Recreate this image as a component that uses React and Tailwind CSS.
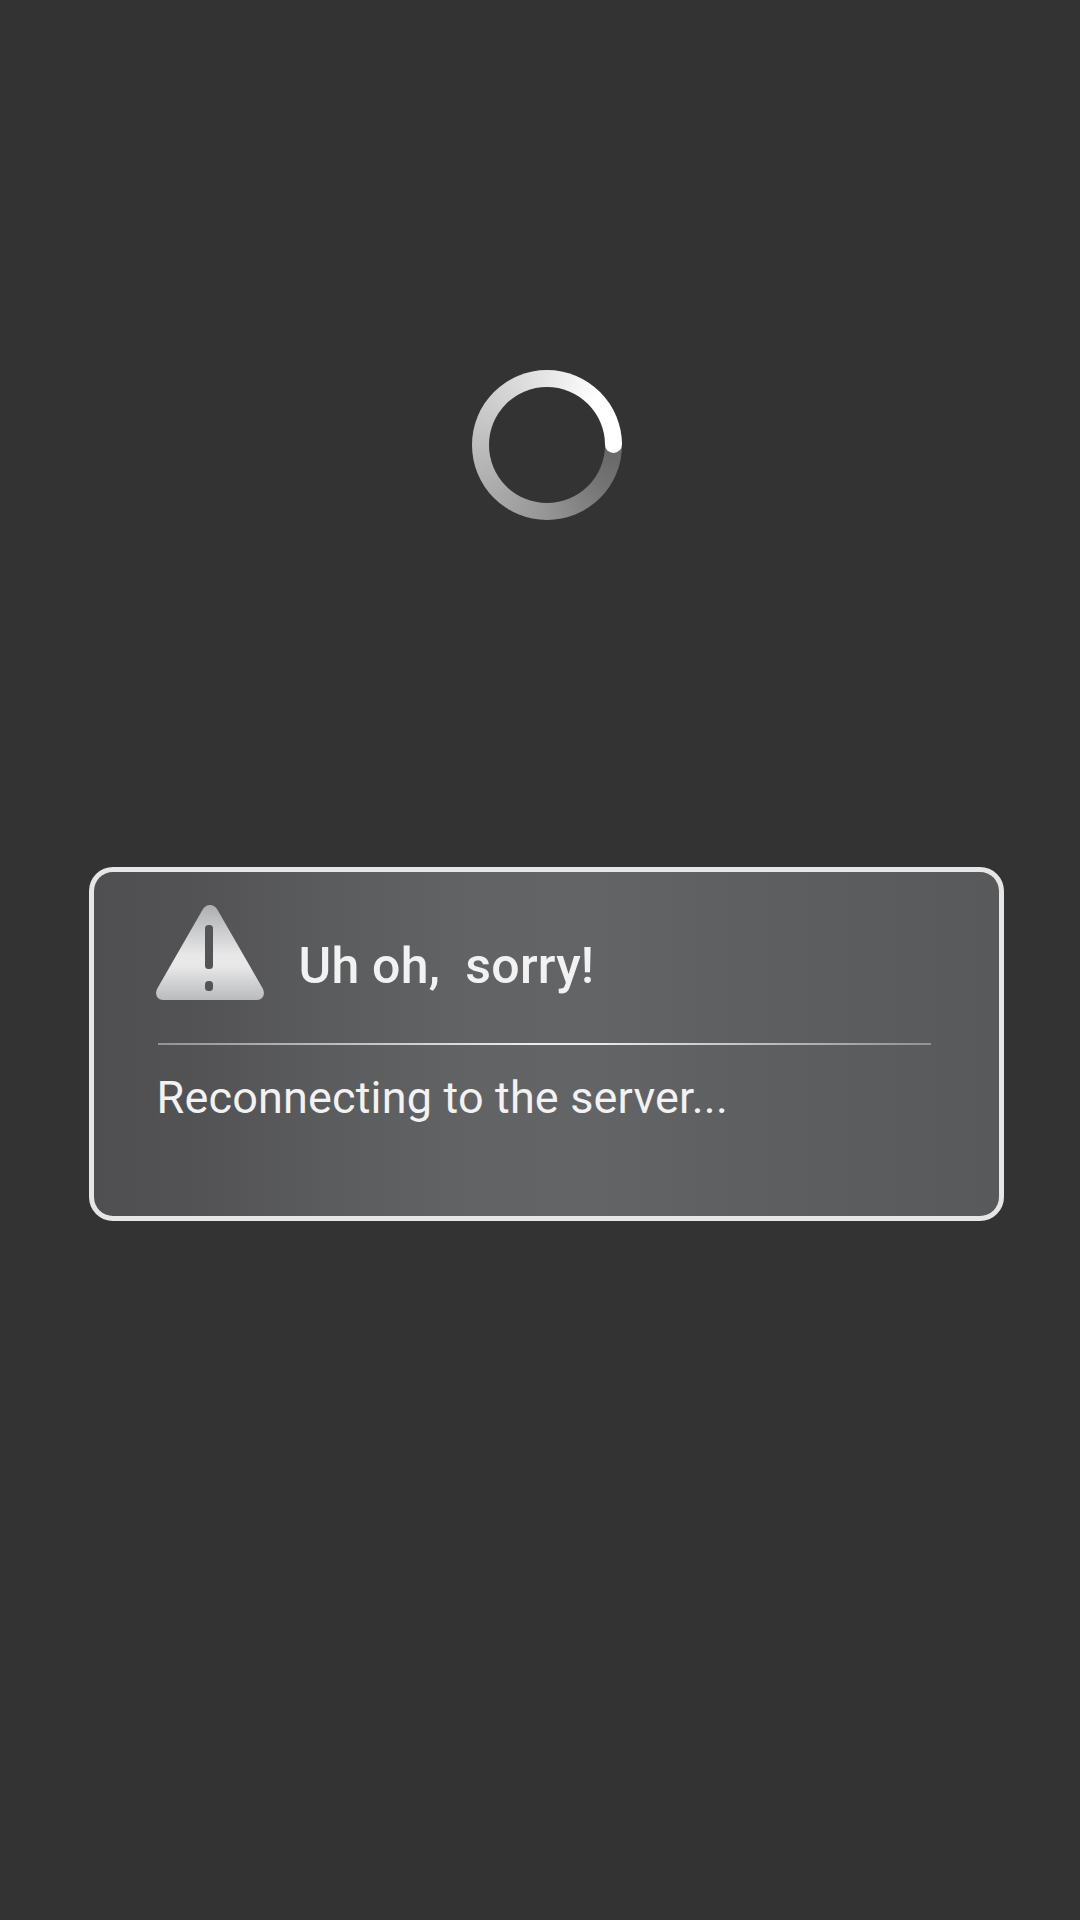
function Spinner() {
  return (
    <div className="relative ml-[472px] size-[150px]">
      <div className="size-full rounded-full bg-[conic-gradient(from_90deg,#666666_0%,#747474_10%,#959595_25%,#b5b5b5_45%,#c0c0c0_52%,#d2d2d2_63%,#e6e6e6_75%,#ffffff_88%,#ffffff_100%)]" />
      <div className="absolute left-[133px] top-[65.5px] size-[17px] rounded-full bg-white" />
      <div className="absolute inset-[17px] rounded-full bg-[#333333]" />
    </div>
  );
}

function WarningIcon() {
  return (
    <svg className="h-[95px] w-[108px] shrink-0" viewBox="0 0 108 95">
      <defs>
        <linearGradient id="metal" x1="0" y1="0" x2="0" y2="1">
          <stop offset="0" stopColor="#acaeb1" />
          <stop offset="0.2" stopColor="#c3c4c6" />
          <stop offset="0.53" stopColor="#e8e8e9" />
          <stop offset="0.64" stopColor="#e8e8e9" />
          <stop offset="1" stopColor="#b9bbbd" />
        </linearGradient>
      </defs>
      <path
        d="M47 4 Q49.8 0 54 0 Q58.200 0 61 4 L107 84 Q109.300 89.500 106 93 Q104.300 95 101 95 H7 Q3.700 95 2 93 Q-1.300 89.500 1 84 Z"
        fill="url(#metal)"
      />
      <rect x="49" y="20" width="8" height="44" rx="3.500" fill="#545456" />
      <rect x="49" y="76" width="8" height="10" rx="3.500" fill="#545456" />
    </svg>
  );
}

function ErrorCard() {
  return (
    <div className="ml-[89px] mt-[347px] h-[354px] w-[915px] rounded-[24px] bg-[#e6e6e6] p-[5px]">
      <div className="h-full rounded-[19px] bg-[linear-gradient(90deg,#4f4f51_0%,#535355_12%,#5b5c5e_26%,#626365_42%,#636466_55%,#5e5f61_72%,#58595b_100%)] pl-16 pt-[33px]">
        <div className="flex h-[95px] items-start">
          <div className="-ml-0.5">
            <WarningIcon />
          </div>
          <h1 className="ml-[34.5px] mt-9 whitespace-pre font-['Roboto',sans-serif] text-[50px] font-medium leading-[50px] tracking-[0.22px] text-[#f2f2f2]">
            {"Uh oh,  sorry!"}
          </h1>
        </div>
        <div className="mt-[43px] h-0.5 w-[773px] bg-[linear-gradient(90deg,#929395_0%,#ececec_48%,#ececec_56%,#929294_100%)]" />
        <p className="-ml-[1.5px] mt-[30px] whitespace-pre font-['Roboto',sans-serif] text-[45px] font-normal leading-[45px] tracking-[0.16px] text-[#f2f2f2]">
          Reconnecting to the server...
        </p>
      </div>
    </div>
  );
}

export default function App() {
  return (
    <main className="h-[1920px] w-[1080px] overflow-hidden bg-[#333333] pt-[370px]">
      <Spinner />
      <ErrorCard />
    </main>
  );
}
